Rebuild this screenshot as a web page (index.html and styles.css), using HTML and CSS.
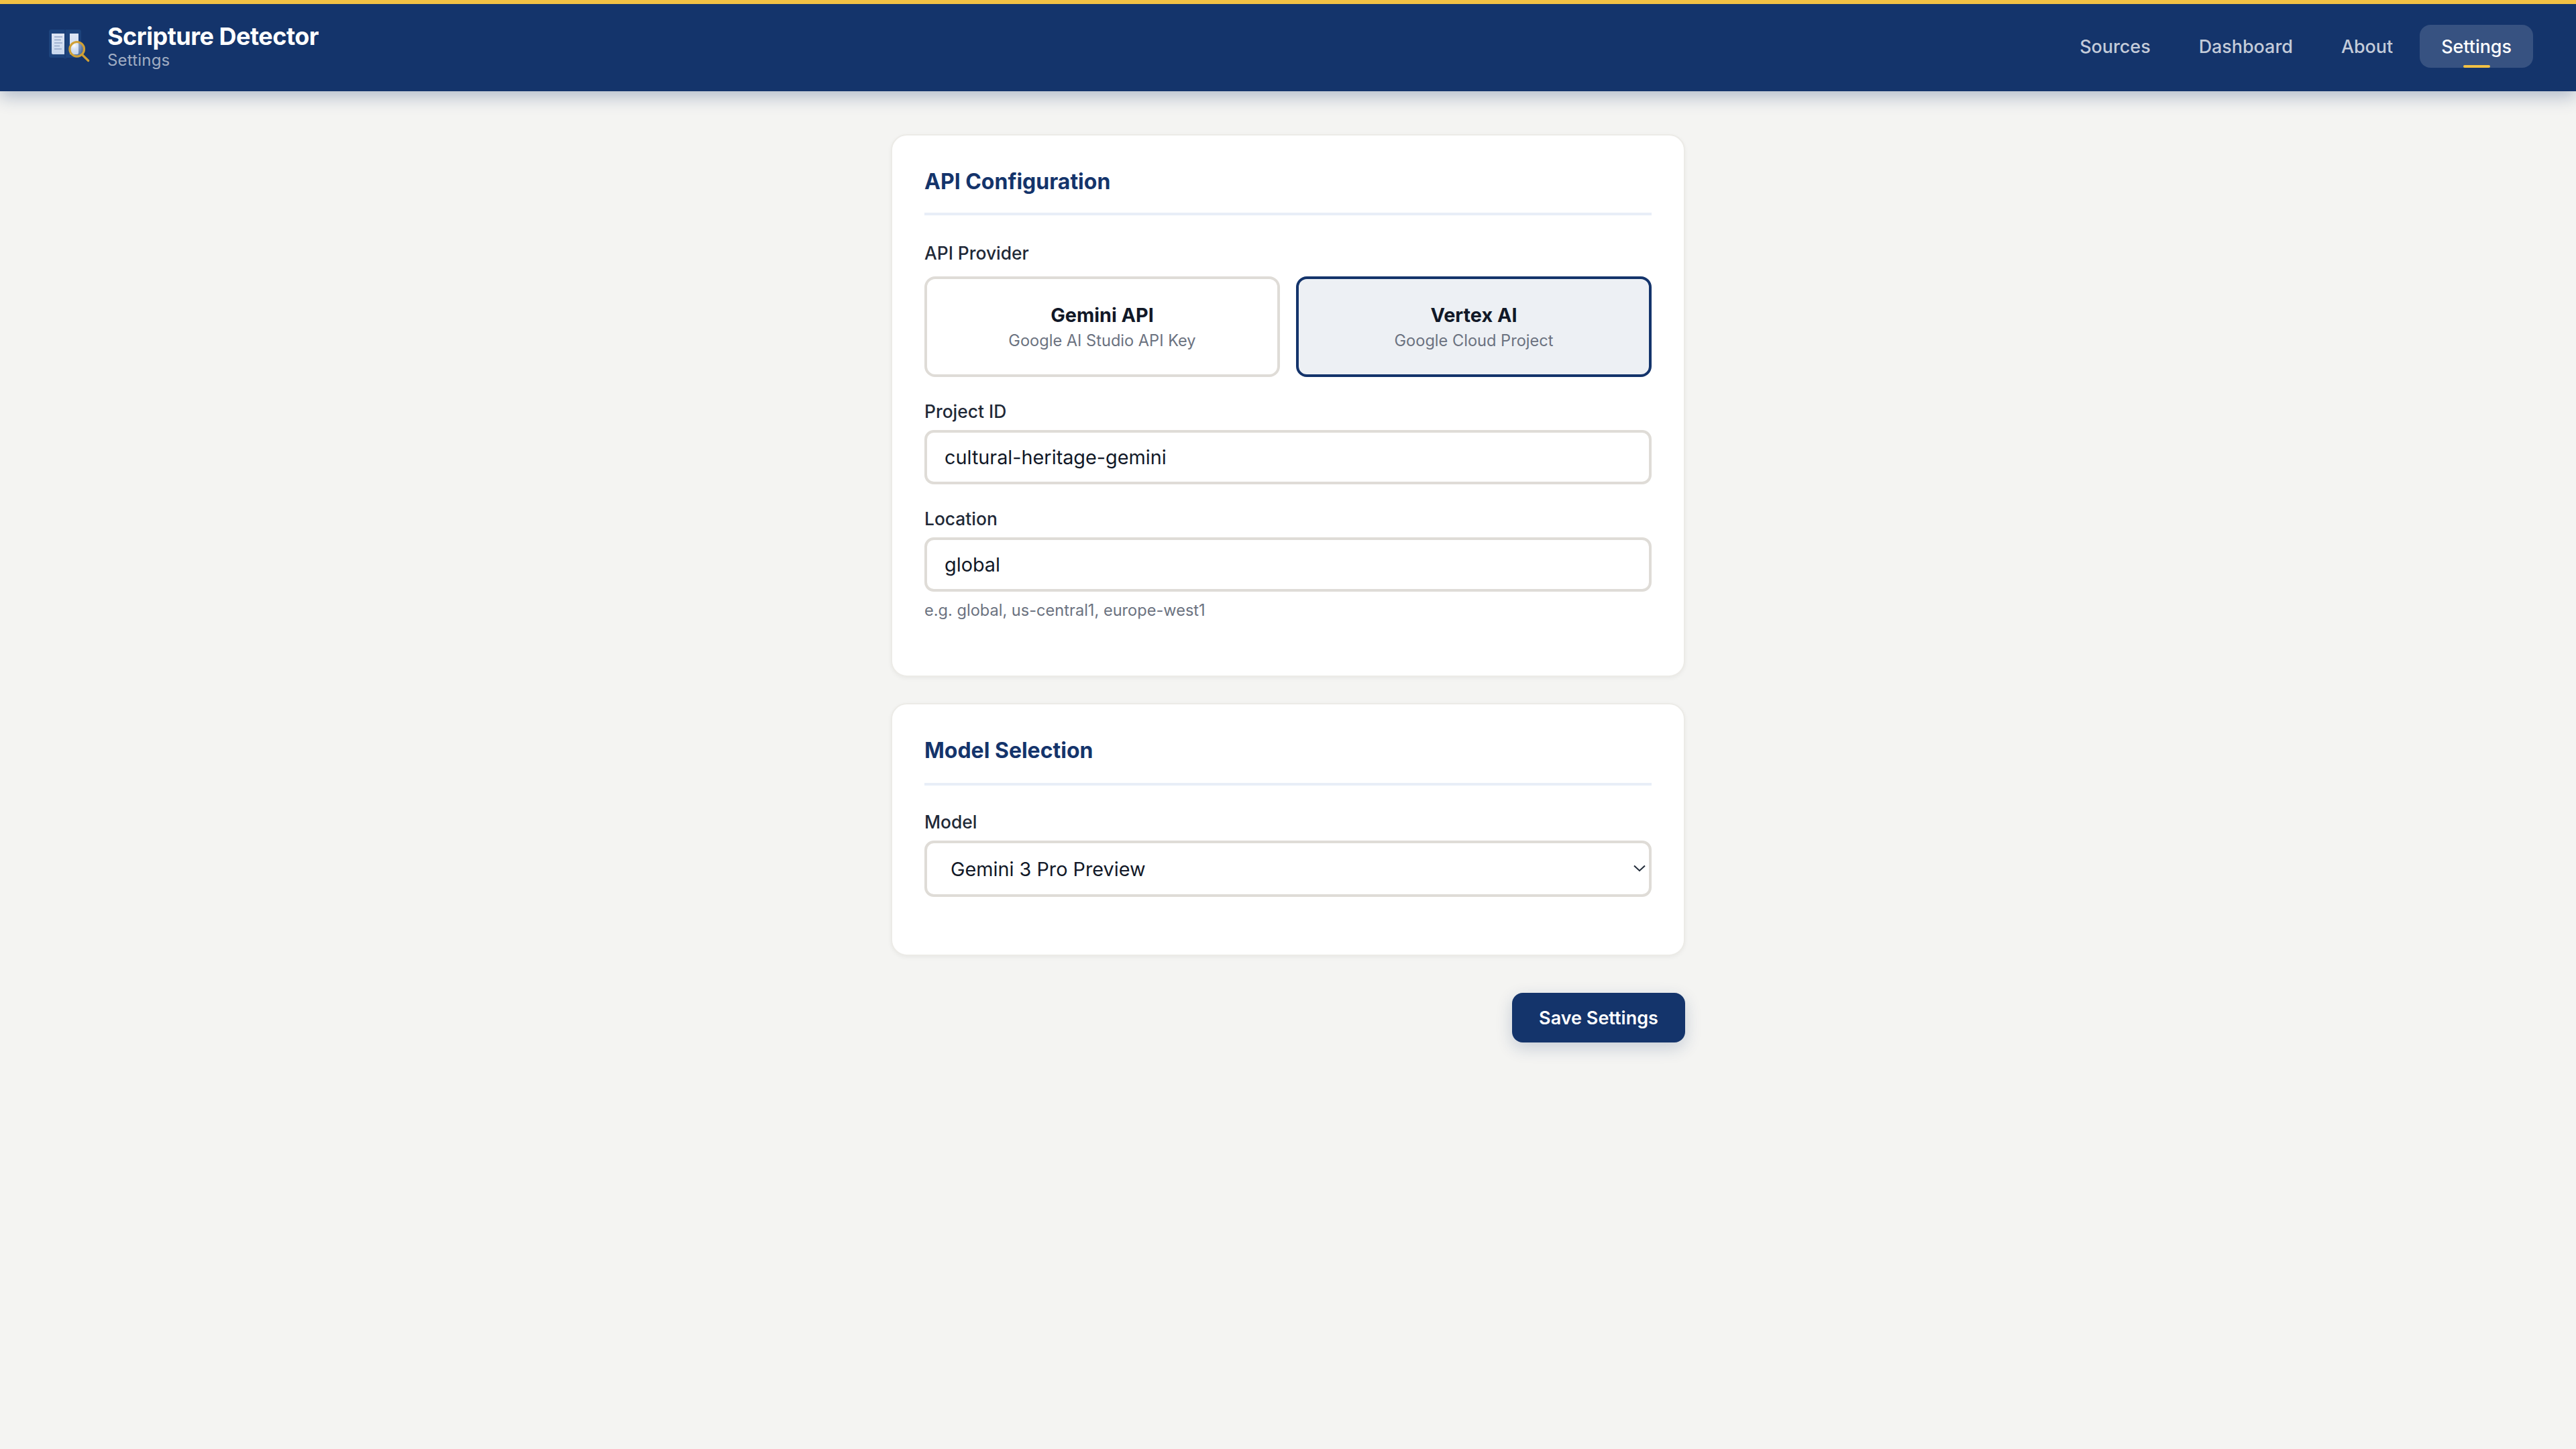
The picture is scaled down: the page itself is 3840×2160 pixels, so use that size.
FILE: index.html
```html
<!DOCTYPE html>
<html lang="en">
<head>
<meta charset="utf-8">
<title>Scripture Detector - Settings</title>
<link rel="stylesheet" href="styles.css">
</head>
<body>
<header class="topbar">
  <div class="brand">
    <svg class="logo" width="60" height="48" viewBox="0 0 60 48" aria-hidden="true">
      <defs>
        <linearGradient id="pg" x1="0" y1="0" x2="0" y2="1"><stop offset="0" stop-color="#dfe7f5"/><stop offset="1" stop-color="#c8d7ee"/></linearGradient>
        <radialGradient id="lens" cx="0.3" cy="0.25" r="0.85"><stop offset="0" stop-color="#ffffff" stop-opacity="0.95"/><stop offset="0.35" stop-color="#d8e3f4" stop-opacity="0.6"/><stop offset="1" stop-color="#a9bfe0" stop-opacity="0.3"/></radialGradient>
      </defs>
      <path d="M3 0H45q3 0 3 3V39q0 3-3 3H26.500L24 44 21.500 42H3q-3 0-3-3V3q0-3 3-3z" fill="#1d437c"/>
      <path d="M24 0V44" stroke="#14346b" stroke-width="0.8"/>
      <path d="M4 6H23V37H6q-2 0-2-2z" fill="url(#pg)"/>
      <path d="M31 6H44V35q0 2-2 2H31z" fill="url(#pg)"/>
      <path d="M8 11H20M8 15.500H18M8 20H20M8 24.500H16M8 29H19" stroke="#93a7c8" stroke-width="1.600"/>
      <circle cx="41.700" cy="29.300" r="10.800" fill="url(#lens)" stroke="#d0a035" stroke-width="3.200"/>
      <path d="M50 38L58.700 46.500" stroke="#d0a035" stroke-width="3.200" stroke-linecap="round"/>
    </svg>
    <div class="brand-text">
      <div class="brand-title">Scripture Detector</div>
      <div class="brand-sub">Settings</div>
    </div>
  </div>
  <nav class="nav">
    <a class="nav-link">Sources</a>
    <a class="nav-link">Dashboard</a>
    <a class="nav-link">About</a>
    <a class="nav-link active">Settings</a>
  </nav>
</header>
<main class="page">
  <section class="card">
    <h2 class="card-title">API Configuration</h2>
    <div class="field field-provider">
      <label class="label">API Provider</label>
      <div class="providers">
        <div class="provider">
          <div class="provider-name">Gemini API</div>
          <div class="provider-desc">Google AI Studio API Key</div>
        </div>
        <div class="provider selected">
          <div class="provider-name">Vertex AI</div>
          <div class="provider-desc">Google Cloud Project</div>
        </div>
      </div>
    </div>
    <div class="field">
      <label class="label">Project ID</label>
      <input class="input" type="text" value="cultural-heritage-gemini">
    </div>
    <div class="field">
      <label class="label">Location</label>
      <input class="input" type="text" value="global">
      <div class="hint">e.g. global, us-central1, europe-west1</div>
    </div>
  </section>
  <section class="card card-model">
    <h2 class="card-title">Model Selection</h2>
    <div class="field field-model">
      <label class="label">Model</label>
      <div class="select-wrap">
        <select class="select"><option>Gemini 3 Pro Preview</option></select>
        <svg class="chevron" width="18" height="11" viewBox="0 0 18 11" aria-hidden="true"><path d="M1 1.500L9 9L17 1.500" fill="none" stroke="#1f2937" stroke-width="2"/></svg>
      </div>
    </div>
  </section>
  <div class="actions"><button class="save" type="button">Save Settings</button></div>
</main>
</body>
</html>
```

FILE: styles.css
```css
* { box-sizing: border-box; }
html, body { margin: 0; padding: 0; }
body {
  min-height: 2160px;
  background: #f4f4f2;
  font-family: Inter, "Liberation Sans", sans-serif;
  color: #111827;
}
.topbar {
  height: 136px;
  border-top: 6px solid #f2c144;
  background: #14346b;
  box-shadow: 0 8px 24px rgba(20, 52, 107, 0.3);
  display: flex;
  align-items: center;
  justify-content: space-between;
  padding: 0 64px 0 73px;
}
.brand { display: flex; align-items: center; gap: 27px; }
.logo { display: block; margin-top: -6px; overflow: visible; }
.brand-text { display: flex; flex-direction: column; margin-top: -6px; }
.brand-title { font-size: 36px; line-height: 44px; font-weight: 700; color: #fff; letter-spacing: -0.5px; }
.brand-sub { font-size: 24px; line-height: 28px; color: rgba(255, 255, 255, 0.6); letter-spacing: 0.2px; }
.nav { display: flex; gap: 8px; margin-top: -4px; }
.nav-link {
  position: relative;
  height: 64px;
  padding: 0 32px;
  display: flex;
  align-items: center;
  border-radius: 16px;
  font-size: 26.9px;
  font-weight: 500;
  color: rgba(255, 255, 255, 0.75);
}
.nav-link.active { background: rgba(255, 255, 255, 0.15); color: #fff; }
.nav-link.active::after {
  content: "";
  position: absolute;
  left: 50%;
  bottom: 0;
  width: 40px;
  height: 4px;
  margin-left: -20px;
  border-radius: 2px;
  background: #f2c144;
}
.page {
  width: 1184px;
  margin: 0 auto;
  padding-top: 64px;
  display: flex;
  flex-direction: column;
  gap: 39px;
}
.card {
  background: #fff;
  border: 2px solid #ecebe7;
  border-radius: 24px;
  padding: 48px;
  box-shadow: 0 2px 6px rgba(0, 0, 0, 0.05);
}
.card-title {
  margin: 0 0 40px;
  padding-bottom: 26px;
  border-bottom: 4px solid #e8eef7;
  font-size: 32px;
  line-height: 41px;
  font-weight: 700;
  color: #14346b;
}
.card-model .card-title { padding-bottom: 28px; }
.field { margin-bottom: 35px; display: flex; flex-direction: column; }
.field:last-child { margin-bottom: 31px; }
.field-model { margin-top: -2px; }
.field-model:last-child { margin-bottom: 38px; }
.label {
  font-size: 26.4px;
  line-height: 32px;
  font-weight: 500;
  color: #1f2937;
  margin-bottom: 12px;
}
.field-provider .label { margin-bottom: 19px; }
.providers { display: grid; grid-template-columns: 1fr 1fr; gap: 24px; }
.provider {
  height: 150px;
  border: 4px solid #dfdcd7;
  border-radius: 16px;
  background: #fff;
  display: flex;
  flex-direction: column;
  align-items: center;
  justify-content: center;
}
.provider.selected { border-color: #14346b; background: #edf0f4; }
.provider-name { font-size: 28.8px; line-height: 38px; font-weight: 700; color: #111827; }
.provider-desc { font-size: 23.6px; line-height: 32px; color: #6b7280; margin-top: 3px; }
.input {
  display: block;
  width: 100%;
  height: 81px;
  padding: 0 26px;
  border: 4px solid #dfdcd7;
  border-radius: 14px;
  background: #fff;
  font-family: inherit;
  font-size: 28.8px;
  color: #111827;
  outline: none;
}
.hint { margin-top: 10px; font-size: 23.6px; line-height: 36px; color: #6b7280; }
.select-wrap { position: relative; }
.select {
  display: block;
  width: 100%;
  height: 84px;
  padding: 0 35px;
  border: 4px solid #dfdcd7;
  border-radius: 14px;
  background: #fff;
  font-family: inherit;
  font-size: 28.8px;
  color: #111827;
  appearance: none;
  outline: none;
}
.chevron { position: absolute; right: 9px; top: 36px; pointer-events: none; }
.actions { display: flex; justify-content: flex-end; margin-top: 16px; }
.save {
  width: 258px;
  height: 74px;
  border: 0;
  border-radius: 16px;
  background: #14346b;
  color: #fff;
  font-family: inherit;
  font-size: 27px;
  font-weight: 600;
  box-shadow: 0 8px 24px rgba(20, 52, 107, 0.2);
}
```
